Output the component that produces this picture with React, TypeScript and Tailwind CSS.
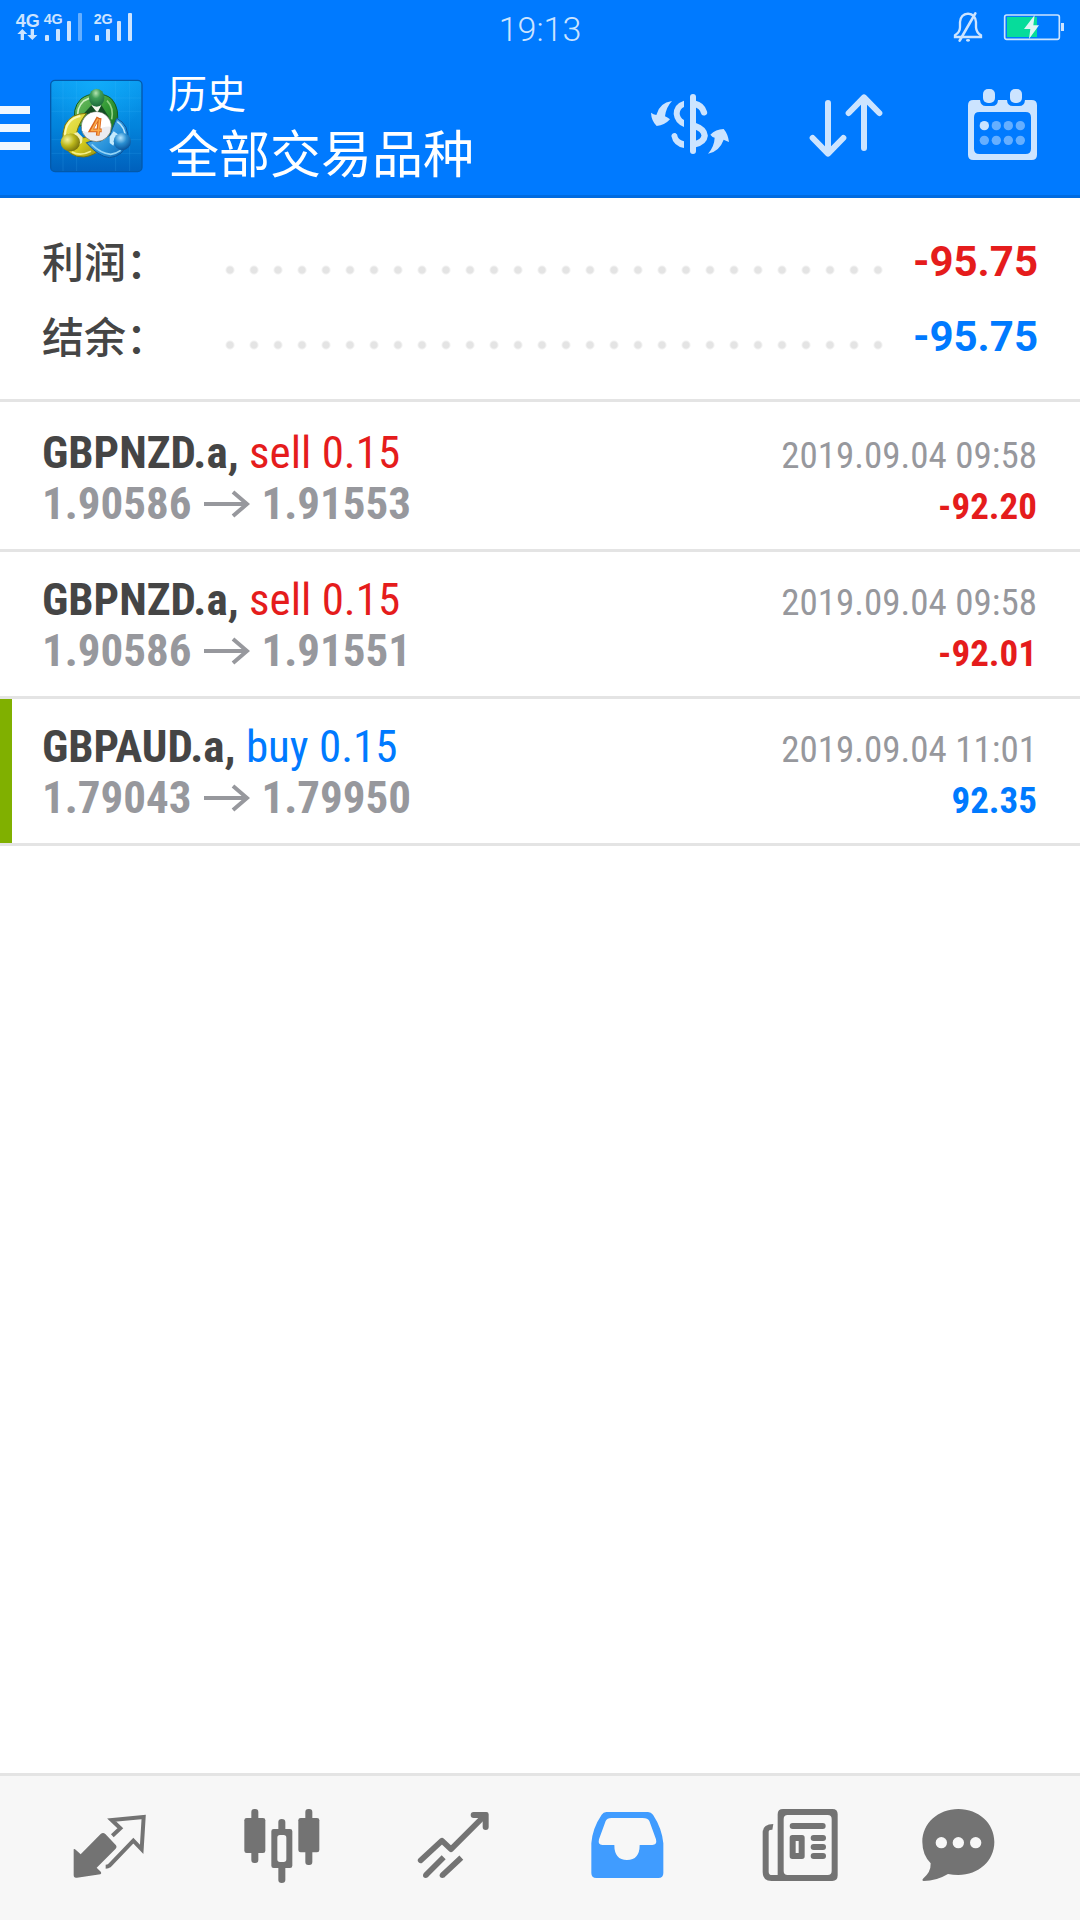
import type { ReactNode } from 'react';

interface IDeal {
    symbol: string;
    side: 'sell' | 'buy';
    volume: string;
    open: string;
    close: string;
    time: string;
    profit: string;
    marked?: boolean;
}

const deals: IDeal[] = [
    { symbol: 'GBPNZD.a', side: 'sell', volume: '0.15', open: '1.90586', close: '1.91553', time: '2019.09.04 09:58', profit: '-92.20' },
    { symbol: 'GBPNZD.a', side: 'sell', volume: '0.15', open: '1.90586', close: '1.91551', time: '2019.09.04 09:58', profit: '-92.01' },
    { symbol: 'GBPAUD.a', side: 'buy', volume: '0.15', open: '1.79043', close: '1.79950', time: '2019.09.04 11:01', profit: '92.35', marked: true },
];

function SignalIcons() {
    return (
        <svg className="h-[54px] w-[160px]" viewBox="0 0 480 162" fill="#cce4ff">
            <g fontFamily="Liberation Sans, Arial, sans-serif" fontWeight="700">
                <text x="47" y="81" fontSize="54">4G</text>
                <text x="131" y="72" fontSize="43">4G</text>
                <text x="281" y="72" fontSize="43">2G</text>
            </g>
            <path d="M67 87L82 102H72V120H62V102H52ZM97 120L82 105H92V87H102V105H112Z" />
            <rect x="135" y="105" width="12" height="18" rx="3" />
            <rect x="168" y="87" width="12" height="36" rx="3" />
            <rect x="201" y="63" width="12" height="60" rx="3" />
            <rect x="234" y="39" width="12" height="84" rx="3" opacity=".5" />
            <rect x="285" y="105" width="12" height="18" rx="3" />
            <rect x="318" y="87" width="12" height="36" rx="3" />
            <rect x="351" y="63" width="12" height="60" rx="3" />
            <rect x="384" y="39" width="12" height="84" rx="3" />
        </svg>
    )
}

function BatteryIcons() {
    return (
        <svg className="h-[54px] w-[160px]" viewBox="0 0 480 162" fill="none" stroke="#cce4ff">
            <path d="M105 111V106Q120 97 120 82V66Q122 43 144 41Q166 43 168 66V82Q169 97 183 106V111Z" strokeWidth="7" />
            <path d="M119 122L166 40" strokeWidth="8" strokeLinecap="round" />
            <ellipse cx="144" cy="121" rx="6" ry="4" fill="#cce4ff" stroke="none" />
            <rect x="254" y="45" width="164" height="73" rx="6" strokeWidth="5" />
            <rect x="261" y="51" width="90" height="60" fill="#06dc9b" stroke="none" />
            <rect x="423" y="69" width="9" height="24" fill="#cce4ff" stroke="none" />
            <path d="M344 45L312 87H331L327 117L357 76H340Z" fill="#dff5f5" stroke="none" />
        </svg>
    )
}

function Logo() {
    return (
        <svg className="h-[96px] w-[96px]" viewBox="22 24 288 288">
            <defs>
                <linearGradient id="tile" x1="0" y1="0" x2="0" y2="1">
                    <stop offset="0" stopColor="#0a9af0" />
                    <stop offset=".5" stopColor="#0284dc" />
                    <stop offset="1" stopColor="#0060bc" />
                </linearGradient>
                <radialGradient id="glow" cx=".5" cy="0" r=".6">
                    <stop offset="0" stopColor="#14b4ff" stopOpacity=".7" />
                    <stop offset="1" stopColor="#14b4ff" stopOpacity="0" />
                </radialGradient>
                <linearGradient id="green" x1="0" y1="0" x2="1" y2="1">
                    <stop offset="0" stopColor="#7cc36c" />
                    <stop offset=".5" stopColor="#339a35" />
                    <stop offset="1" stopColor="#14641e" />
                </linearGradient>
                <linearGradient id="yellow" x1="0" y1="0" x2="1" y2="1">
                    <stop offset="0" stopColor="#f0ea62" />
                    <stop offset=".6" stopColor="#d2c91e" />
                    <stop offset="1" stopColor="#8f8a10" />
                </linearGradient>
                <linearGradient id="blue" x1="0" y1="0" x2="1" y2="1">
                    <stop offset="0" stopColor="#6cc2f0" />
                    <stop offset=".6" stopColor="#2590da" />
                    <stop offset="1" stopColor="#0c60ae" />
                </linearGradient>
                <radialGradient id="greenHead" cx=".45" cy=".25" r=".75">
                    <stop offset="0" stopColor="#b4e4b0" />
                    <stop offset=".4" stopColor="#3f9e58" />
                    <stop offset="1" stopColor="#1c6a3c" />
                </radialGradient>
                <radialGradient id="yellowHead" cx=".35" cy=".35" r=".7">
                    <stop offset="0" stopColor="#f2f2a0" />
                    <stop offset=".5" stopColor="#bdb81c" />
                    <stop offset="1" stopColor="#77720c" />
                </radialGradient>
                <radialGradient id="blueHead" cx=".4" cy=".3" r=".7">
                    <stop offset="0" stopColor="#b6e6ff" />
                    <stop offset=".5" stopColor="#2a8ed0" />
                    <stop offset="1" stopColor="#0b559c" />
                </radialGradient>
            </defs>
            <rect x="30" y="31" width="274" height="274" rx="13" fill="url(#tile)" />
            <rect x="30" y="31" width="274" height="274" rx="13" fill="url(#glow)" />
            <path d="M67 33V303M108 33V303M225 33V303M267 33V303M32 84H302M32 124H302M32 209H302M32 250H302" stroke="#4cc0ff" strokeOpacity=".16" strokeWidth="3" />
            <rect x="30" y="31" width="274" height="274" rx="13" fill="none" stroke="#0359ab" strokeWidth="4" />
            <path d="M106 166Q91 116 121 87Q139 72 167 72Q197 72 213 87Q239 116 228 166Q219 190 204 209L191 184L141 148L123 168Z" fill="url(#green)" stroke="#145a20" strokeWidth="3" />
            <path d="M113 145Q106 114 129 93Q144 84 156 83" fill="none" stroke="#d0efc4" strokeWidth="5" />
            <path d="M199 92Q220 113 213 148" fill="none" stroke="#8fd083" strokeWidth="5" />
            <path d="M131 129L153 105H182L204 140V170Z" fill="#144f24" />
            <path d="M152 106H182L170 128Z" fill="#f2f7ee" />
            <path d="M137 130Q91 130 73 165Q64 189 67 216Q83 263 130 261Q160 257 181 237L151 201L120 204L108 188Q113 162 137 130Z" fill="url(#yellow)" stroke="#77720c" strokeWidth="3" />
            <path d="M73 197Q74 148 119 138" fill="none" stroke="#fbf8b2" strokeWidth="6" />
            <path d="M94 246Q119 260 151 244" fill="none" stroke="#f4ee86" strokeWidth="5" />
            <path d="M228 145Q267 164 261 214Q249 260 206 263Q174 260 137 218Q157 209 178 214L208 195L214 179Z" fill="url(#blue)" stroke="#0b559c" strokeWidth="3" />
            <path d="M230 155Q255 173 253 202" fill="none" stroke="#b7e4fc" strokeWidth="5" />
            <path d="M153 223Q180 250 210 253Q226 251 240 241" fill="none" stroke="#92d4f7" strokeWidth="5" />
            <path d="M83 189L96 193L110 186L126 202L124 218L115 224Q109 199 83 198Z" fill="#f5f1b0" />
            <path d="M256 190L234 194L219 184L207 200V219L218 227Q220 205 249 200Z" fill="#c4eafd" />
            <ellipse cx="168" cy="83" rx="23" ry="27" fill="url(#greenHead)" />
            <ellipse cx="89" cy="217" rx="29" ry="27" fill="url(#yellowHead)" />
            <ellipse cx="245" cy="214" rx="26" ry="26" fill="url(#blueHead)" />
            <circle cx="167" cy="170" r="45" fill="#ececf0" stroke="#6b7560" strokeWidth="2" />
            <path d="M124 170A43 43 0 0 1 210 170Q188 168 166 182Q143 190 124 182Z" fill="#fff" />
            <path d="M173 142L151 181H183M171 197L177 144" fill="none" stroke="#d9641c" strokeWidth="11" />
            <path d="M172 146L153 181H182M172 195L177 148" fill="none" stroke="#fbab4a" strokeWidth="5" />
        </svg>
    )
}

function DollarIcon() {
    return (
        <svg className="h-24 w-24" viewBox="36 24 288 288" fill="#cce4ff">
            <path d="M126 93Q88 98 79 135Q70 133 63 128Q64 152 80 168Q104 166 120 148Q112 142 105 139Q108 112 126 93Z" />
            <path d="M234 251Q253 230 254 203Q247 202 241 194Q257 178 281 177Q294 192 297 216Q290 213 281 209Q268 245 234 251Z" />
            <path d="M162 92Q131 102 131 132Q134 160 162 171V150Q149 143 149 130Q150 116 162 111Z" />
            <path d="M124 198Q126 188 136 189Q143 192 143 200Q147 209 162 214V234Q130 228 124 198Z" />
            <rect x="180" y="72" width="18" height="180" rx="9" />
            <path d="M193 101Q216 106 222 127M193 167Q223 177 224 197Q222 217 193 223" fill="none" stroke="#cce4ff" strokeWidth="19" strokeLinecap="round" />
        </svg>
    )
}

function SortIcon() {
    return (
        <svg className="h-24 w-24" viewBox="504 24 288 288" fill="none" stroke="#cce4ff" strokeWidth="18" strokeLinecap="round" strokeLinejoin="round">
            <path d="M594 99V250M548 204L594 251L640 204" />
            <path d="M702 234V83M656 129L702 82L748 129" />
        </svg>
    )
}

function CalendarIcon() {
    return (
        <svg className="h-24 w-24" viewBox="972 24 288 288" fill="#cce4ff">
            <path fillRule="evenodd" d="M1030 90H1050Q1052 108 1068 108H1086Q1103 108 1104 90H1131Q1132 108 1149 108H1167Q1184 108 1185 90H1205Q1221 90 1221 106V254Q1221 270 1205 270H1030Q1014 270 1014 254V106Q1014 90 1030 90ZM1048 126Q1032 126 1032 142V236Q1032 252 1048 252H1187Q1203 252 1203 236V142Q1203 126 1187 126Z" />
            <rect x="1059" y="57" width="36" height="42" rx="15" />
            <rect x="1140" y="57" width="36" height="42" rx="15" />
            <circle cx="1063" cy="167" r="14" />
            <g opacity=".5">
                <circle cx="1099" cy="167" r="14" />
                <circle cx="1135" cy="167" r="14" />
                <circle cx="1171" cy="167" r="14" />
                <circle cx="1063" cy="211" r="14" />
                <circle cx="1099" cy="211" r="14" />
                <circle cx="1135" cy="211" r="14" />
                <circle cx="1171" cy="211" r="14" />
            </g>
        </svg>
    )
}

function NavButton({ label, viewBox, active, children }: { label: string, viewBox: string, active?: boolean, children: ReactNode }) {
    return (
        <button
            type="button"
            aria-label={label}
            aria-current={active ? 'page' : undefined}
            className={`flex flex-1 items-center justify-center ${active ? 'text-[#409cff]' : 'text-[#737373]'}`}
        >
            <svg className="h-[108px] w-[108px]" viewBox={viewBox} fill="currentColor">
                {children}
            </svg>
        </button>
    )
}

function SummaryRow({ label, value, valueClass }: { label: string, value: string, valueClass: string }) {
    return (
        <div className="flex h-[75px] items-center">
            <dt className="w-[176px] pb-1 text-[42px] leading-[60px] font-medium text-[#454545]">{label}</dt>
            <dd className="flex flex-1 items-center">
                <span className="mt-4 h-[24px] flex-1 bg-[radial-gradient(circle,#e4e4e4_3px,transparent_5px)] bg-[size:24px_24px]" />
                <span className={`w-[149px] text-right font-[Roboto,sans-serif] text-[42px] font-bold ${valueClass}`}>{value}</span>
            </dd>
        </div>
    )
}

function DealRow({ deal }: { deal: IDeal }) {
    const renderProfit = () => {
        if (deal.profit.startsWith('-')) {
            return <span className="text-[#e51c1c]">{deal.profit}</span>
        }
        return <span className="text-[#007aff]">{deal.profit}</span>
    }
    return (
        <li className={`flex h-[147px] justify-between border-b-3 border-[#e4e4e4] pr-[43px] font-['Roboto_Condensed','Liberation_Sans_Narrow',Roboto,sans-serif] ${deal.marked ? '' : 'pl-[12px]'}`}>
            {deal.marked && <span className="w-[12px] bg-[#80b000]" />}
            <div className="flex-1 pt-[22px] pl-[30px] text-[45px] leading-[51px]">
                <p>
                    <b className="text-[#454545]">{deal.symbol}, </b>
                    <span className={deal.side === 'sell' ? 'text-[#e51c1c]' : 'text-[#007aff]'}>{deal.side} {deal.volume}</span>
                </p>
                <p className="flex items-center font-bold text-[#97989d]">
                    {deal.open}
                    <svg className="mx-3 h-[30px] w-[46px]" viewBox="0 0 46 30" fill="none" stroke="currentColor" strokeWidth="4">
                        <path d="M0 15H43M29 3L43 15L29 27" />
                    </svg>
                    {deal.close}
                </p>
            </div>
            <div className="pt-[25px] text-right text-[37px] leading-[51px]">
                <p className="text-[#97989d]">{deal.time}</p>
                <p className="font-bold">{renderProfit()}</p>
            </div>
        </li>
    )
}

function App() {
    return (
        <div className="flex min-h-screen flex-col bg-white font-['Noto_Sans_CJK_SC',sans-serif]">
            <header className="border-b-3 border-[#006be0] bg-[#007aff] text-white">
                <div className="flex h-[54px] items-center justify-between">
                    <SignalIcons />
                    <time className="pt-1 font-[Roboto,sans-serif] text-[34px] font-light text-[#cce4ff]">19:13</time>
                    <BatteryIcons />
                </div>
                <div className="flex h-[141px] items-center pt-[3px]">
                    <button type="button" aria-label="菜单" className="flex w-[30px] flex-col gap-[10px] pt-1">
                        <span className="h-2 bg-[#f0f7ff]" />
                        <span className="h-2 bg-[#f0f7ff]" />
                        <span className="h-2 bg-[#f0f7ff]" />
                    </button>
                    <div className="ml-[18px]">
                        <Logo />
                    </div>
                    <div className="ml-[24px] flex-1 pb-[7px]">
                        <p className="text-[39px] leading-[56px]">历史</p>
                        <h1 className="text-[51px] leading-[64px]">全部交易品种</h1>
                    </div>
                    <button type="button" aria-label="品种" className="flex w-[156px] justify-center"><DollarIcon /></button>
                    <button type="button" aria-label="排序" className="flex w-[156px] justify-center"><SortIcon /></button>
                    <button type="button" aria-label="日期" className="flex w-[156px] justify-center"><CalendarIcon /></button>
                </div>
            </header>

            <main className="flex-1">
                <dl className="border-b-3 border-[#e4e4e4] pt-[26px] pr-[42px] pb-[25px] pl-[42px]">
                    <SummaryRow label="利润：" value="-95.75" valueClass="text-[#e51c1c]" />
                    <SummaryRow label="结余：" value="-95.75" valueClass="text-[#007aff]" />
                </dl>
                <ul className="pt-[3px]">
                    {deals.map((deal, index) => <DealRow key={index} deal={deal} />)}
                </ul>
            </main>

            <nav className="flex h-[147px] border-t-3 border-[#e4e4e4] bg-[#f7f7f7] pr-[21px] pl-[24px]">
                <NavButton label="行情" viewBox="49 102 324 324">
                    <path d="M102 268Q104 265 108 269L123 283L183 222Q190 216 197 222L229 256Q233 261 228 266L171 323L184 336Q186 341 182 343L112 353Q102 355 102 345Z" />
                    <path d="M218 227L242 205L216 180L312 171L306 268L281 242L209 317Q205 320 198 320" fill="none" stroke="currentColor" strokeWidth="12" />
                </NavButton>
                <NavButton label="图表" viewBox="566 102 324 324">
                    <rect x="633" y="147" width="21" height="162" rx="9" />
                    <rect x="612" y="174" width="63" height="105" rx="7" />
                    <rect x="795" y="147" width="21" height="168" rx="9" />
                    <rect x="774" y="174" width="63" height="103" rx="7" />
                    <path d="M714 215V186Q714 177 724 177Q735 177 735 186V215ZM714 315V360Q714 369 724 369Q735 369 735 360V315Z" />
                    <path fillRule="evenodd" d="M700 207H749Q756 207 756 214V317Q756 324 749 324H700Q693 324 693 317V214Q693 207 700 207ZM719 225Q711 225 711 233V298Q711 306 719 306H730Q738 306 738 298V233Q738 225 730 225Z" />
                </NavButton>
                <NavButton label="交易" viewBox="1084 102 324 324">
                    <g fill="none" stroke="currentColor" strokeWidth="17">
                        <path d="M1143 301L1207 242L1234 268L1336 166" strokeLinecap="round" strokeLinejoin="round" />
                        <path d="M1158 346L1212 292M1208 346L1265 293" />
                    </g>
                    <path d="M1293 165Q1293 156 1302 156H1340Q1347 156 1347 163V201Q1347 210 1338 210Q1329 210 1329 201V174H1302Q1293 174 1293 165Z" />
                    <circle cx="1158" cy="346" r="8" />
                    <circle cx="1208" cy="346" r="8" />
                </NavButton>
                <NavButton label="历史" viewBox="41 102 324 324" active>
                    <path fillRule="evenodd" d="M138 156H263Q272 156 278 164Q305 205 309 250V339Q309 354 294 354H108Q93 354 93 339V250Q96 205 124 164Q129 156 138 156ZM153 174Q140 174 136 183L116 238Q112 255 126 255H162Q162 300 200 300Q238 300 238 255H276Q291 255 287 238L267 183Q263 174 247 174Z" />
                </NavButton>
                <NavButton label="新闻" viewBox="559 102 324 324">
                    <path fillRule="evenodd" d="M670 147H818Q834 147 834 163V346Q834 363 818 363H636Q609 363 609 336V215Q611 192 641 192L638 209Q627 208 627 216V335Q627 345 637 345H654V163Q654 147 670 147ZM684 165Q672 165 672 177V333Q672 345 684 345H804Q816 345 816 333V177Q816 165 804 165Z" />
                    <rect x="690" y="189" width="108" height="18" rx="9" />
                    <path fillRule="evenodd" d="M698 225H727Q735 225 735 233V289Q735 297 727 297H698Q690 297 690 289V233Q690 225 698 225ZM708 243V279H717V243Z" />
                    <rect x="753" y="225" width="46" height="18" rx="9" />
                    <rect x="753" y="252" width="46" height="18" rx="9" />
                    <rect x="753" y="279" width="46" height="18" rx="9" />
                </NavButton>
                <NavButton label="消息" viewBox="1076 102 324 324">
                    <path d="M1194 147C1255 147 1302 190 1302 246C1302 302 1255 345 1194 345Q1178 345 1163 342Q1128 363 1090 363Q1084 361 1088 356Q1112 337 1111 310Q1086 284 1086 246C1086 190 1133 147 1194 147Z" />
                    <g fill="#f7f7f7">
                        <circle cx="1143" cy="248" r="17" />
                        <circle cx="1194" cy="248" r="17" />
                        <circle cx="1246" cy="248" r="17" />
                    </g>
                </NavButton>
            </nav>
        </div>
    )
}

export default App
